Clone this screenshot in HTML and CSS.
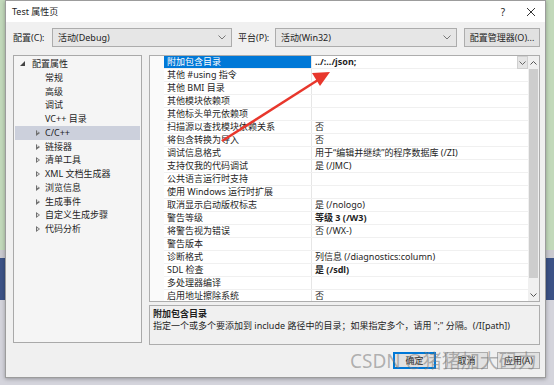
FILE: index.html
```html
<!DOCTYPE html>
<html lang="zh-CN">
<head>
    <meta charset="UTF-8">
    <title>Test 属性页</title>
    <link rel="stylesheet" href="styles.css">
</head>
<body>
<div class="dialog">
    <div class="titlebar">
        <span class="title">Test 属性页</span>
        <span class="help">?</span>
        <svg class="close" width="10" height="10" viewBox="0 0 10 10"><path d="M1 1L9 9M9 1L1 9" stroke="#333" stroke-width="1"/></svg>
    </div>

    <div class="toolbar">
        <label class="lbl-cfg">配置(C):</label>
        <div class="combo combo-cfg">
            <span>活动(Debug)</span>
            <svg width="8" height="5" viewBox="0 0 8 5"><path d="M0.5 0.5L4 4L7.5 0.5" fill="none" stroke="#777"/></svg>
        </div>
        <label class="lbl-plat">平台(P):</label>
        <div class="combo combo-plat">
            <span>活动(Win32)</span>
            <svg width="8" height="5" viewBox="0 0 8 5"><path d="M0.5 0.5L4 4L7.5 0.5" fill="none" stroke="#777"/></svg>
        </div>
        <button class="btn btn-mgr">配置管理器(O)...</button>
    </div>

    <div class="main">
        <ul class="tree">
            <li class="root"><svg width="6" height="6" viewBox="0 0 6 6"><polygon points="5,0 5,5 0,5" fill="#444"/></svg>配置属性</li>
            <li class="leaf">常规</li>
            <li class="leaf">高级</li>
            <li class="leaf">调试</li>
            <li class="leaf">VC++ 目录</li>
            <li class="node select">C/C++</li>
            <li class="node">链接器</li>
            <li class="node">清单工具</li>
            <li class="node">XML 文档生成器</li>
            <li class="node">浏览信息</li>
            <li class="node">生成事件</li>
            <li class="node">自定义生成步骤</li>
            <li class="node">代码分析</li>
        </ul>

        <div class="side">
            <div class="grid">
                <div class="rows">
                    <div class="row cur"><div class="name">附加包含目录</div><div class="val bold">../:../json;<span class="drop"><svg width="7" height="4" viewBox="0 0 7 4"><path d="M0.5 0.5L3.5 3.5L6.5 0.5" fill="none" stroke="#666"/></svg></span></div></div>
                    <div class="row"><div class="name">其他 #using 指令</div><div class="val"></div></div>
                    <div class="row"><div class="name">其他 BMI 目录</div><div class="val"></div></div>
                    <div class="row"><div class="name">其他模块依赖项</div><div class="val"></div></div>
                    <div class="row"><div class="name">其他标头单元依赖项</div><div class="val"></div></div>
                    <div class="row"><div class="name">扫描源以查找模块依赖关系</div><div class="val">否</div></div>
                    <div class="row"><div class="name">将包含转换为导入</div><div class="val">否</div></div>
                    <div class="row"><div class="name">调试信息格式</div><div class="val">用于“编辑并继续”的程序数据库 (/ZI)</div></div>
                    <div class="row"><div class="name">支持仅我的代码调试</div><div class="val">是 (/JMC)</div></div>
                    <div class="row"><div class="name">公共语言运行时支持</div><div class="val"></div></div>
                    <div class="row"><div class="name">使用 Windows 运行时扩展</div><div class="val"></div></div>
                    <div class="row"><div class="name">取消显示启动版权标志</div><div class="val">是 (/nologo)</div></div>
                    <div class="row"><div class="name">警告等级</div><div class="val bold">等级 3 (/W3)</div></div>
                    <div class="row"><div class="name">将警告视为错误</div><div class="val">否 (/WX-)</div></div>
                    <div class="row"><div class="name">警告版本</div><div class="val"></div></div>
                    <div class="row"><div class="name">诊断格式</div><div class="val">列信息 (/diagnostics:column)</div></div>
                    <div class="row"><div class="name">SDL 检查</div><div class="val bold">是 (/sdl)</div></div>
                    <div class="row"><div class="name">多处理器编译</div><div class="val"></div></div>
                    <div class="row"><div class="name">启用地址擦除系统</div><div class="val">否</div></div>
                </div>
                <div class="scroll">
                    <svg class="up" width="7" height="4" viewBox="0 0 7 4"><path d="M0.5 3.5L3.5 0.5L6.5 3.5" fill="none" stroke="#555"/></svg>
                    <div class="thumb"></div>
                    <svg class="down" width="7" height="4" viewBox="0 0 7 4"><path d="M0.5 0.5L3.5 3.5L6.5 0.5" fill="none" stroke="#555"/></svg>
                </div>
            </div>
            <div class="desc">
                <b>附加包含目录</b>
                <p>指定一个或多个要添加到 include 路径中的目录；如果指定多个，请用 ";" 分隔。(/I[path])</p>
            </div>
        </div>
    </div>

    <div class="footer">
        <button class="btn ok">确定</button>
        <button class="btn">取消</button>
        <button class="btn">应用(A)</button>
    </div>

    <!-- 红色箭头标注 -->
    <svg class="arrow" width="554" height="385" viewBox="0 0 554 385">
        <line x1="222" y1="141" x2="318" y2="80" stroke="#e8372c" stroke-width="2.5"/>
        <polygon points="330,72 312,73 320,86" fill="#e8372c"/>
    </svg>
    <div class="mark">CSDN @猪猪加大码力</div>
</div>
</body>
</html>
```

FILE: styles.css
```css
* {
    margin: 0;
    padding: 0;
    box-sizing: border-box;
}

ul, li {
    list-style: none;
}

body {
    background: linear-gradient(#c2d9bb 0, #c2d9bb 250px, #c9c9cf 250px, #c9c9cf 258px, #3c5286 258px, #3c5286 300px, #d4d4dc 300px);
    font-family: "Noto Sans", "Noto Sans CJK SC", sans-serif;
    font-size: 9px;
    color: #1e1e1e;
    height: 385px;
    overflow: hidden;
}

.dialog {
    position: relative;
    margin-left: 5px;
    width: 541px;
    height: 378px;
    background: #f0f0f0;
    border: 1px solid #9c9c9c;
    box-shadow: 0 1px 4px rgba(0, 0, 0, .3);
}

/* 标题栏 */
.titlebar {
    display: flex;
    align-items: center;
    height: 21px;
    padding-left: 6px;
    background: #fff;
}

.titlebar .title {
    flex: 1;
}

.titlebar .help {
    font-size: 10px;
    margin-right: 21px;
}

.titlebar .close {
    margin-right: 9px;
}

/* 配置/平台 */
.toolbar {
    display: flex;
    align-items: center;
    height: 19px;
    margin-top: 6px;
    padding-left: 7px;
}

.toolbar label {
    white-space: nowrap;
}

.lbl-cfg {
    width: 39px;
}

.lbl-plat {
    width: 37px;
    margin-left: 6px;
}

.combo {
    display: flex;
    align-items: center;
    justify-content: space-between;
    height: 19px;
    padding: 0 5px 0 5px;
    background: #e6e6e6;
    border: 1px solid #acacac;
}

.combo-cfg {
    width: 180px;
}

.combo-plat {
    width: 182px;
}

.btn {
    height: 19px;
    background: #e1e1e1;
    border: 1px solid #adadad;
    font: inherit;
    color: inherit;
}

.btn-mgr {
    width: 76px;
    margin-left: 7px;
}

/* 主体 */
.main {
    display: flex;
    gap: 7px;
    height: 290px;
    margin-top: 8px;
    padding-left: 7px;
}

.tree {
    width: 129px;
    height: 288px;
    padding: 1px 1px;
    background: #f5f5f5;
    border: 1px solid #a9a9a9;
}

.tree li {
    position: relative;
    height: 13.75px;
    line-height: 13.75px;
    white-space: nowrap;
}

.tree .root {
    padding-left: 17px;
}

.tree .root svg {
    position: absolute;
    left: 5px;
    top: 4px;
}

.tree .leaf,
.tree .node {
    padding-left: 30px;
}

.tree .node::before {
    content: "";
    position: absolute;
    left: 21px;
    top: 4px;
    border-left: 4px solid #6f6f6f;
    border-top: 3px solid transparent;
    border-bottom: 3px solid transparent;
}

.tree .node::after {
    content: "";
    position: absolute;
    left: 22px;
    top: 5.5px;
    border-left: 2px solid #f5f5f5;
    border-top: 1.5px solid transparent;
    border-bottom: 1.5px solid transparent;
}

.tree .select {
    background: #ccd0dc;
}

.tree .select::after {
    border-left-color: #ccd0dc;
}

.side {
    display: flex;
    flex-direction: column;
    width: 391px;
}

/* 属性表格 */
.grid {
    display: flex;
    height: 247px;
    background: #fff;
    border: 1px solid #adadad;
    overflow: hidden;
}

.rows {
    flex: 1;
    padding-left: 14px;
    background: #fafafa;
}

.row {
    display: flex;
    height: 13px;
    line-height: 12px;
    background: #fff;
    border-bottom: 1px solid #f0f0f0;
    white-space: nowrap;
}

.row .name {
    width: 148px;
    padding-left: 3px;
    border-right: 1px solid #e6e6e6;
}

.row .val {
    position: relative;
    flex: 1;
    padding-left: 3px;
}

.row.cur .name {
    background: #0078d7;
    color: #fff;
}

.bold {
    font-weight: bold;
}

.drop {
    position: absolute;
    right: 0;
    top: 0;
    display: flex;
    align-items: center;
    justify-content: center;
    width: 11px;
    height: 13px;
    background: #e5e5e5;
    border: 1px solid #d0d0d0;
}

.scroll {
    display: flex;
    flex-direction: column;
    align-items: center;
    width: 11px;
    background: #f0f0f0;
}

.scroll .up {
    margin-top: 5px;
}

.scroll .thumb {
    width: 9px;
    height: 209px;
    margin-top: 4px;
    background: #cdcdcd;
}

.scroll .down {
    margin-top: auto;
    margin-bottom: 4px;
}

.desc {
    height: 40px;
    margin-top: 3px;
    padding: 2px 3px;
    border: 1px solid #adadad;
    line-height: 12px;
    white-space: nowrap;
}

/* 底部按钮 */
.footer {
    display: flex;
    justify-content: flex-end;
    gap: 9px;
    margin-top: 7px;
    padding-right: 5px;
}

.footer .btn {
    width: 43px;
    height: 17px;
}

.footer .ok {
    border: 1px solid #0078d7;
    box-shadow: inset 0 0 0 1px #0078d7;
}

.arrow {
    position: absolute;
    left: -6px;
    top: -1px;
    pointer-events: none;
}

.mark {
    position: absolute;
    left: 344px;
    top: 345px;
    font-size: 19px;
    color: rgba(120, 120, 120, .55);
    white-space: nowrap;
    pointer-events: none;
}
```
